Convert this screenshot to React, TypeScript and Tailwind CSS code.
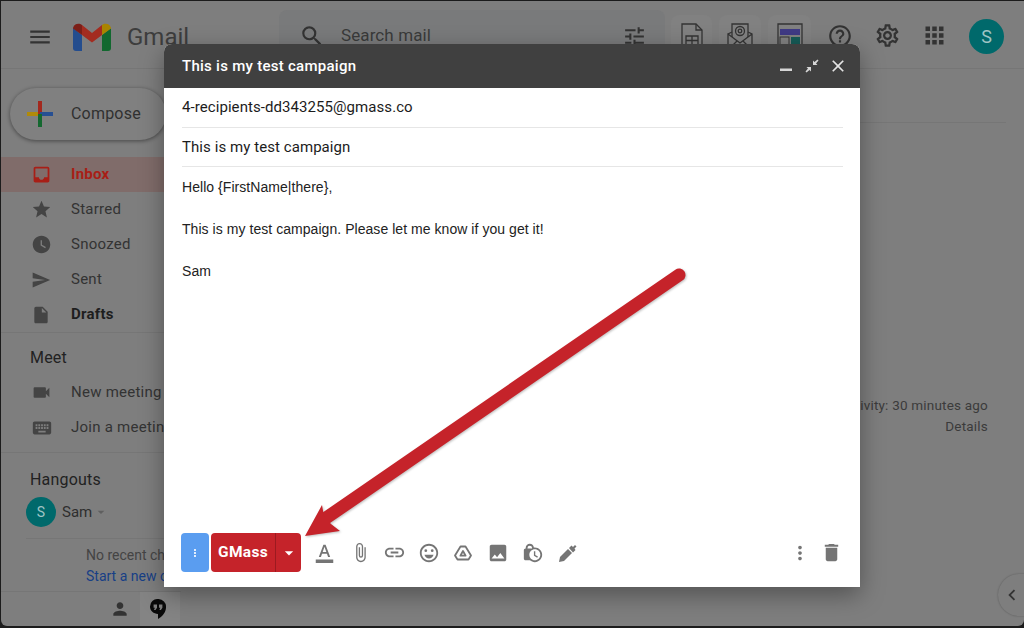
import type { ReactNode } from 'react'
import {
  MdApps,
  MdAttachFile,
  MdDelete,
  MdFormatColorText,
  MdHelpOutline,
  MdInbox,
  MdInsertDriveFile,
  MdKeyboard,
  MdLink,
  MdLockClock,
  MdMenu,
  MdMoreVert,
  MdOutlineEmojiEmotions,
  MdOutlineSettings,
  MdPerson,
  MdPhoto,
  MdWatchLater,
  MdSearch,
  MdSend,
  MdStar,
  MdTune,
  MdVideocam,
  MdClose,
  MdArrowDropDown,
  MdChevronLeft,
} from 'react-icons/md'

const roboto = "font-['Roboto',sans-serif]"

function GmailLogo() {
  return (
    <svg width="38" height="29" viewBox="0 0 38 29" aria-hidden="true">
      <path d="M0 6v20a3 3 0 0 0 3 3h6V13z" fill="#244d8e" />
      <path d="M38 6v20a3 3 0 0 1-3 3h-6V13z" fill="#12682f" />
      <path d="M9 13 19 20.5 29 13V3L19 11 9 3z" fill="#a32c20" />
      <path d="M0 6a5.5 5.5 0 0 1 9-3v10L0 6.5z" fill="#7c1f18" />
      <path d="M38 6a5.5 5.5 0 0 0-9-3v10l9-6.5z" fill="#a98400" />
    </svg>
  )
}

function SheetIcon() {
  return (
    <svg width="24" height="28" viewBox="0 0 24 28" fill="none" stroke="#333" strokeWidth="1.3" aria-hidden="true">
      <path d="M2 1h14l6 6v20H2z" />
      <path d="M16 1v6h6" />
      <path d="M6 13h12v9H6zM6 17.5h12M12 13v9" />
    </svg>
  )
}

function MailAtIcon() {
  return (
    <svg width="26" height="28" viewBox="0 0 26 28" fill="none" stroke="#333" strokeWidth="1.3" aria-hidden="true">
      <path d="M5 14V1h16v13" />
      <circle cx="13" cy="8" r="4.5" />
      <circle cx="13" cy="8" r="1.8" />
      <path d="M1 11v16h24V11l-4-2M5 9l-4 2 12 9 12-9M1 27l9-9M25 27l-9-9" />
    </svg>
  )
}

function LayoutIcon() {
  return (
    <svg width="26" height="28" viewBox="0 0 26 28" aria-hidden="true">
      <path d="M1 1h24v27H1z" fill="none" stroke="#333" strokeWidth="1.3" />
      <rect x="3" y="6" width="20" height="6" fill="#3f3a84" />
      <rect x="3" y="14" width="9" height="13" fill="none" stroke="#333" />
      <rect x="14" y="14" width="9" height="13" fill="#165b57" />
    </svg>
  )
}

function HangoutsIcon() {
  return (
    <svg width="16" height="20" viewBox="0 0 16 20" aria-hidden="true">
      <path d="M8 0a7.6 7.6 0 0 0-8 7.6C0 12 3.6 15 8 15v5c4-2 8-6.5 8-11.400A7.800 7.800 0 0 0 8 0z" fill="#0a0a0a" />
      <path d="M3.600 5.500h3.400v3.200L5.500 11H4l.9-2.300H3.600zM9 5.500h3.400v3.200L10.900 11H9.400l.9-2.300H9z" fill="#7f7f7f" />
    </svg>
  )
}

function DriveIcon() {
  return (
    <svg width="18" height="16" viewBox="0 0 18 16" fill="none" stroke="#757575" strokeWidth="1.800" strokeLinejoin="round" aria-hidden="true">
      <path d="M6.500 1.500h5L17 10.500l-2.500 4h-11L1 10.500z" />
      <path d="M9 6l2.600 4.700H6.400z" />
    </svg>
  )
}

function PenIcon() {
  return (
    <svg width="18" height="18" viewBox="0 0 18 18" aria-hidden="true">
      <path d="M0 18l1-5 8-8 4 4-8 8z" fill="#757575" />
      <path d="M10 4l2.500-2.500L14 3l2-2 1.500 1.500-2 2L16.500 6 14 8.500z" fill="#757575" />
    </svg>
  )
}

function NavRow({ icon, label, bold }: { icon: ReactNode; label: string; bold?: boolean }) {
  return (
    <div className="flex h-[35px] items-center pl-[30px]">
      <span className="flex w-[40px] shrink-0 text-[#444]">{icon}</span>
      <span className={`whitespace-nowrap text-[15px] tracking-[0.25px] ${bold ? 'font-bold text-[#1e1e1e]' : 'text-[#333]'}`}>{label}</span>
    </div>
  )
}

function Sidebar() {
  return (
    <aside className="flex w-[180px] shrink-0 flex-col">
      <div className="pl-[9px] pt-[19px]">
        <div className="flex h-[52px] w-[156px] items-center rounded-full bg-[#808080] pl-[17px] shadow-[0_1px_4px_rgba(0,0,0,0.45)]">
          <svg width="26" height="26" viewBox="0 0 26 26" aria-hidden="true">
            <rect x="0" y="11" width="13" height="4" fill="#b08a0a" />
            <rect x="11" y="0" width="4" height="13" fill="#a3281d" />
            <rect x="13" y="11" width="13" height="4" fill="#264f92" />
            <rect x="11" y="13" width="4" height="13" fill="#14682f" />
          </svg>
          <span className="ml-[18px] text-[16px] tracking-[0.2px] text-[#303030]">Compose</span>
        </div>
      </div>
      <div className="mt-[17px] flex h-[35px] items-center bg-[#806c6a] pl-[30px]">
        <span className="flex w-[40px] shrink-0 text-[#a81e16]">
          <MdInbox size={21} />
        </span>
        <span className="text-[15px] font-bold tracking-[0.25px] text-[#a81e16]">Inbox</span>
      </div>
      <NavRow icon={<MdStar size={21} />} label="Starred" />
      <NavRow icon={<MdWatchLater size={21} />} label="Snoozed" />
      <NavRow icon={<MdSend size={20} />} label="Sent" />
      <NavRow icon={<MdInsertDriveFile size={20} />} label="Drafts" bold />
      <div className="border-t border-[#767676] pl-[29px] pt-[14px] text-[16px] leading-[22px] tracking-[0.2px] text-[#222]">Meet</div>
      <div className="mt-[6px]">
        <NavRow icon={<MdVideocam size={21} />} label="New meeting" />
        <NavRow icon={<MdKeyboard size={22} />} label="Join a meeting" />
      </div>
      <div className="mt-[7px] border-t border-[#767676] pl-[29px] pt-[16px] text-[16px] leading-[22px] tracking-[0.2px] text-[#222]">Hangouts</div>
      <div className="mt-[6px] flex items-center pl-[25px]">
        <span className="flex h-[30px] w-[30px] items-center justify-center rounded-full bg-[#00696b] text-[14px] text-[#9fc4c4]">S</span>
        <span className="ml-[6px] text-[15px] text-[#2e2e2e]">Sam</span>
        <MdArrowDropDown size={16} className="ml-[1px] text-[#5f5f5f]" />
      </div>
      <div className="ml-[25px] mt-[11px] border-t border-[#767676] pl-[60px] pt-[6px] text-[14px] leading-[20px]">
        <div className="whitespace-nowrap text-[#444]">No recent chats</div>
        <div className="mt-[1px] whitespace-nowrap text-[#173f86]">Start a new one</div>
      </div>
      <div className="mt-auto flex h-[35px] items-center border-t border-[#767676]">
        <span className="ml-[109px] text-[#333]">
          <MdPerson size={20} />
        </span>
        <span className="ml-[10px] flex h-full w-[40px] items-center bg-[#848484] pl-[10px]">
          <HangoutsIcon />
        </span>
      </div>
    </aside>
  )
}

function TopBar() {
  return (
    <header className="flex h-[68px] shrink-0 items-center border-b border-[#767676]">
      <span className="ml-[26px] mt-[4px] text-[#333]">
        <MdMenu size={26} />
      </span>
      <span className="ml-[20px] mt-[4px]">
        <GmailLogo />
      </span>
      <span className="ml-[16px] mt-[4px] w-[64px] text-[24px] text-[#3d3d3d]">Gmail</span>
      <div className="ml-[88px] flex h-[50px] w-[386px] shrink-0 items-center rounded-lg bg-[#797a7b] px-[20px] pt-[3px]">
        <MdSearch size={26} className="text-[#333]" />
        <span className="ml-[16px] text-[17px] tracking-[0.1px] text-[#3a3a3a]">Search mail</span>
        <MdTune size={25} className="ml-auto mr-[-2px] text-[#333]" />
      </div>
      <div className="ml-[6px] mt-[2px] flex h-[42px] w-[41px] items-center justify-center rounded-lg bg-[#818181] pt-[2px]">
        <SheetIcon />
      </div>
      <div className="ml-[7px] mt-[2px] flex h-[42px] w-[42px] items-center justify-center rounded-lg bg-[#818181] pt-[2px]">
        <MailAtIcon />
      </div>
      <div className="ml-[7px] mt-[2px] flex h-[42px] w-[43px] items-center justify-center rounded-lg bg-[#818181] pt-[2px]">
        <LayoutIcon />
      </div>
      <MdHelpOutline size={26} className="ml-[16px] mt-[2px] text-[#333]" />
      <MdOutlineSettings size={27} className="ml-[21px] mt-[2px] text-[#333]" />
      <MdApps size={27} className="ml-[20px] mt-[2px] text-[#333]" />
      <span className="ml-[21px] mt-[4px] flex h-[35px] w-[35px] items-center justify-center rounded-full bg-[#00696b] text-[18px] text-[#9fc4c4]">S</span>
    </header>
  )
}

function Background() {
  return (
    <div className={`flex h-full flex-col bg-[#7e7e7e] ${roboto}`}>
      <TopBar />
      <div className="flex min-h-0 flex-1">
        <Sidebar />
        <main className="flex flex-1 flex-col">
          <div className="mt-[53px] mr-[18px] border-b border-[#767676]" />
          <div className="mt-[272px] pr-[36px] text-right text-[13.5px] leading-[21px] tracking-[0.2px] text-[#3b3b3b]">
            <div>Last account activity: 30 minutes ago</div>
            <div>Details</div>
          </div>
        </main>
      </div>
    </div>
  )
}

function ComposeToolbar() {
  return (
    <div className="flex items-center pb-[15px] pl-[17px] pr-[17px] pt-[2px]">
      <span className="flex h-[39px] w-[28px] items-center justify-center rounded-[4px] bg-[#5a9df0] text-white">
        <MdMoreVert size={12} />
      </span>
      <div className="ml-[2px] flex h-[39px] items-center rounded-[4px] bg-[#c5232a] text-white">
        <span className={`w-[64px] text-center text-[15.5px] font-bold tracking-[0.3px] ${roboto}`}>GMass</span>
        <span className="flex h-full w-[26px] items-center justify-center border-l border-[#9c1a20]">
          <MdArrowDropDown size={20} />
        </span>
      </div>
      <div className="flex items-center text-[#757575]">
        <MdFormatColorText size={21} className="ml-[13px]" />
        <MdAttachFile size={21} className="ml-[15px]" />
        <MdLink size={23} className="ml-[12px]" />
        <MdOutlineEmojiEmotions size={22} className="ml-[12px]" />
        <span className="ml-[14px] flex"><DriveIcon /></span>
        <MdPhoto size={22} className="ml-[15px]" />
        <MdLockClock size={22} className="ml-[13px]" />
        <span className="ml-[15px] flex"><PenIcon /></span>
      </div>
      <MdMoreVert size={22} className="ml-auto text-[#757575]" />
      <MdDelete size={23} className="ml-[9px] text-[#757575]" />
    </div>
  )
}

function ComposeDialog() {
  return (
    <div className="absolute left-[163px] top-[43px] flex h-[543px] w-[696px] flex-col overflow-hidden rounded-t-[8px] bg-white shadow-[0_8px_24px_rgba(0,0,0,0.35)]">
      <div className={`flex h-[44px] shrink-0 items-center bg-[#404040] pl-[18px] pr-[12px] text-white ${roboto}`}>
        <span className="text-[15px] font-medium tracking-[0.27px]">This is my test campaign</span>
        <svg className="ml-auto" width="12" height="12" viewBox="0 0 12 12" aria-hidden="true">
          <rect x="0" y="8.500" width="12" height="2.500" fill="#d6d6d6" />
        </svg>
        <svg className="ml-[13px]" width="14" height="14" viewBox="0 0 14 14" fill="#d6d6d6" aria-hidden="true">
          <path d="M8 6V1.500L9.500 3 12.500.500 13.500 1.500 11 4.500 12.500 6zM6 8v4.500L4.500 11 1.500 13.500.500 12.500 3 9.500 1.500 8z" />
        </svg>
        <MdClose size={20} className="ml-[9px] text-[#e4e4e4]" />
      </div>
      <div className="mx-[18px] mr-[17px] flex flex-1 flex-col">
        <div className={`flex h-[40px] items-center border-b border-[#e6e6e6] text-[15px] tracking-[0.07px] text-[#1c1c1c] ${roboto}`}>
          4-recipients-dd343255@gmass.co
        </div>
        <div className={`flex h-[39px] items-center border-b border-[#e6e6e6] text-[15px] tracking-[0.07px] text-[#1c1c1c] ${roboto}`}>
          This is my test campaign
        </div>
        <div className="pt-[10px] font-['Liberation_Sans',Arial,sans-serif] text-[14px] leading-[21px] tracking-[0.05px] text-[#222]">
          <p>Hello {'{FirstName|there}'},</p>
          <p className="mt-[21px]">This is my test campaign. Please let me know if you get it!</p>
          <p className="mt-[21px]">Sam</p>
        </div>
      </div>
      <ComposeToolbar />
    </div>
  )
}

// coordinates are page pixels minus the 1px window edge
function Arrow() {
  return (
    <svg className="pointer-events-none absolute left-[-1px] top-[-1px]" width="1024" height="628" viewBox="0 0 1024 628" aria-hidden="true">
      <g style={{ filter: 'drop-shadow(1px 1px 1px rgba(0,0,0,0.25))' }}>
        <path d="M679 275 326 518" stroke="#c5232a" strokeWidth="13" strokeLinecap="round" fill="none" />
        <path d="M305 536 322 505 324 516 331 524 340 531z" fill="#c5232a" />
      </g>
    </svg>
  )
}

export default function App() {
  return (
    <div className="h-[628px] w-[1024px] bg-[#1c1c1c] pb-[2px] pl-[1px] pt-[1px]">
      <div className="relative h-full w-full overflow-hidden rounded-b-[6px]">
        <Background />
        <div className="absolute bottom-[10px] right-[-1px] flex h-[42px] w-[27px] items-center rounded-l-full bg-[#7e7e7e] pl-[3px] text-[#333] shadow-[0_0_2px_rgba(0,0,0,0.3)]">
          <MdChevronLeft size={22} />
        </div>
        <ComposeDialog />
        <Arrow />
      </div>
    </div>
  )
}
